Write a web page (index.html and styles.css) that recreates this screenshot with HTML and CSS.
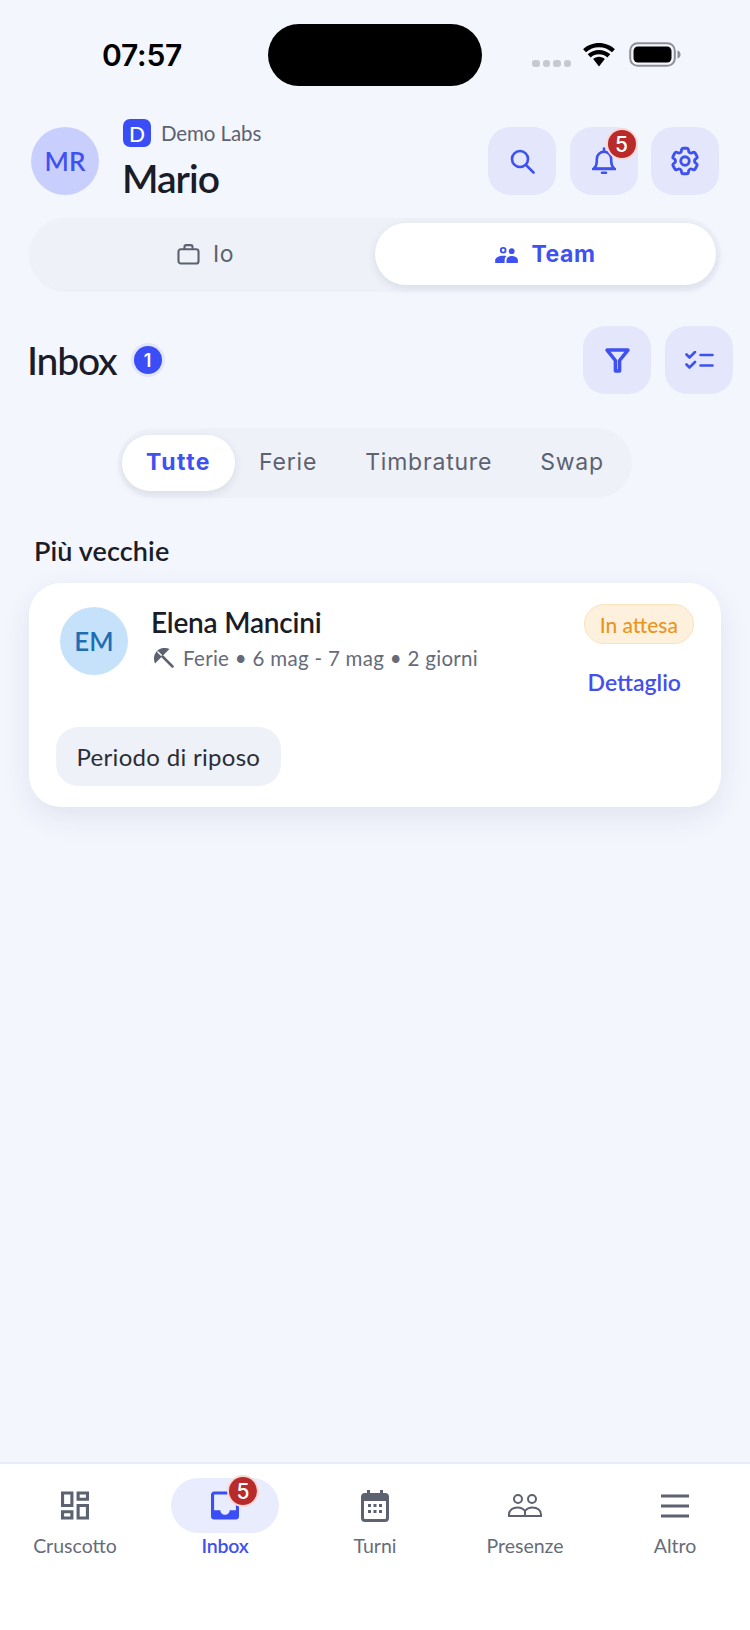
FILE: index.html
```html
<!DOCTYPE html>
<html lang="it">
<head>
<meta charset="utf-8">
<title>Inbox</title>
<link rel="stylesheet" href="styles.css">
</head>
<body>
<div class="app">
  <div class="status">
    <div class="time">07:57</div>
    <div class="island"></div>
    <div class="sys">
      <div class="dots"><i></i><i></i><i></i><i></i></div>
      <svg class="wifi" viewBox="0 0 34 24"><path d="M17 4.200c5 0 9.600 1.900 13 5.100l2.900-3.100C28.700 2.300 23.100 0 17 0S5.300 2.300 1.100 6.200L4 9.300c3.400-3.200 8-5.100 13-5.100z"/><path d="M17 11.200c3.200 0 6.100 1.200 8.300 3.200l3-3.100C25.300 8.500 21.300 6.900 17 6.900S8.700 8.500 5.700 11.300l3 3.100c2.200-2 5.100-3.200 8.300-3.200z"/><path d="M17 13.800c-2.300 0-4.300.9-5.800 2.300L17 23.500l5.800-7.400c-1.500-1.400-3.500-2.300-5.800-2.300z"/></svg>
      <svg class="battery" viewBox="0 0 52 25"><rect x="1.200" y="1.200" width="44.600" height="22.600" rx="7.500" fill="none" stroke="#8e9096" stroke-width="2"/><rect x="4.500" y="4.500" width="38" height="16" rx="4.500" fill="#000"/><path d="M48.500 8.500c2 .5 3 2 3 4s-1 3.500-3 4z" fill="#8e9096"/></svg>
    </div>
  </div>

  <header class="top">
    <div class="avatar avatar-me">MR</div>
    <div class="who">
      <div class="brand"><span class="logo">D</span><span class="brand-name">Demo Labs</span></div>
      <div class="name">Mario</div>
    </div>
    <div class="btns">
      <button class="icon-btn"><svg class="ic ic-search" viewBox="0 0 25 25"><circle cx="10" cy="10" r="8"/><path d="M16 16 23.500 23.500"/></svg></button>
      <button class="icon-btn"><svg class="ic ic-bell" viewBox="0 0 24 28"><path d="M2 21.500c2-2 2.800-3.500 2.800-7.500V12a7.200 7.200 0 0 1 14.400 0v2c0 4 .8 5.500 2.800 7.500z"/><path d="M1 22h22M12 1.500v3M10 25.800h4"/></svg><span class="badge badge-bell">5</span></button>
      <button class="icon-btn"><svg class="ic ic-gear" viewBox="0 0 24 24"><path d="M9.594 3.940c.09-.542.56-.94 1.110-.94h2.593c.55 0 1.020.398 1.110.94l.213 1.281c.063.374.313.686.645.870.074.04.147.083.22.127.325.196.72.257 1.075.124l1.217-.456a1.125 1.125 0 0 1 1.370.490l1.296 2.247a1.125 1.125 0 0 1-.26 1.431l-1.003.827c-.293.241-.438.613-.43.992a7.723 7.723 0 0 1 0 .255c-.008.378.137.75.43.991l1.004.827c.424.35.534.955.26 1.430l-1.298 2.247a1.125 1.125 0 0 1-1.369.491l-1.217-.456c-.355-.133-.75-.072-1.076.124a6.470 6.470 0 0 1-.22.128c-.331.183-.581.495-.644.869l-.213 1.281c-.09.543-.56.94-1.110.94h-2.594c-.55 0-1.019-.398-1.110-.94l-.213-1.281c-.062-.374-.312-.686-.644-.870a6.520 6.520 0 0 1-.22-.127c-.325-.196-.72-.257-1.076-.124l-1.217.456a1.125 1.125 0 0 1-1.369-.49l-1.297-2.247a1.125 1.125 0 0 1 .26-1.431l1.004-.827c.292-.24.437-.613.43-.991a6.932 6.932 0 0 1 0-.255c.007-.38-.138-.751-.43-.992l-1.004-.827a1.125 1.125 0 0 1-.26-1.430l1.297-2.247a1.125 1.125 0 0 1 1.370-.491l1.216.456c.356.133.751.072 1.076-.124.072-.044.146-.086.22-.128.332-.183.582-.495.644-.869l.214-1.280Z"/><circle cx="12" cy="12" r="3"/></svg></button>
    </div>
  </header>

  <div class="toggle">
    <div class="toggle-item">
      <svg class="ic-case" viewBox="0 0 24 22"><rect x="1.500" y="5.500" width="21" height="15" rx="2.500"/><path d="M7.800 5.500V3a1.800 1.800 0 0 1 1.800-1.800h4.800A1.800 1.800 0 0 1 16.200 3v2.500"/></svg>
      <span>Io</span>
    </div>
    <div class="toggle-item toggle-active">
      <svg class="ic-team" viewBox="0 0 24 18"><path fill-rule="evenodd" d="M8.500 1a3.500 3.500 0 1 1 0 7 3.500 3.500 0 0 1 0-7zm0 2a1.500 1.500 0 1 0 0 3 1.500 1.500 0 0 0 0-3z"/><circle cx="17.500" cy="5.500" r="3"/><path d="M0 18v-2.500C0 12 4 10.200 8.500 10.200c1.300 0 2.400.1 3.500.4-1.200 1-2 2.500-2 4.400v3z"/><path d="M12 18v-3c0-2.800 3-4.300 5.500-4.300S24 12.200 24 15v3z"/></svg>
      <span>Team</span>
    </div>
  </div>

  <div class="inbox-head">
    <h1 class="title">Inbox</h1>
    <span class="count">1</span>
    <div class="btns btns-push">
      <button class="icon-btn"><svg class="ic-filter" viewBox="0 0 24 24"><path d="M2 2h20l-8 10v10h-4V12z"/></svg></button>
      <button class="icon-btn"><svg class="ic-list" viewBox="0 0 29 19"><path d="M1.500 3.500 4.500 6.500 10 1M1.500 13.500 4.500 16.500 10 11M15.500 4h12M15.500 14.500h12"/></svg></button>
    </div>
  </div>

  <div class="seg-wrap">
    <div class="seg">
      <div class="seg-item seg-active">Tutte</div>
      <div class="seg-item">Ferie</div>
      <div class="seg-item">Timbrature</div>
      <div class="seg-item">Swap</div>
    </div>
  </div>

  <h2 class="section">Più vecchie</h2>

  <article class="card">
    <div class="card-top">
      <div class="avatar avatar-em">EM</div>
      <div class="card-main">
        <div class="person">Elena Mancini</div>
        <div class="meta">
          <svg class="ic-beach" viewBox="0 0 20 20"><path d="M1 15.500C-1 10.500 0 6 3 3s7.500-4 12.500-2L1 15.500z"/><path d="M3.500 3.500 8 8" class="beach-rib"/><path d="M8.500 8.500 18.500 18.500" class="beach-stick"/></svg>
          <span>Ferie • 6 mag - 7 mag • 2 giorni</span>
        </div>
      </div>
      <div class="card-side">
        <span class="pill-wait">In attesa</span>
        <span class="link">Dettaglio</span>
      </div>
    </div>
    <div class="chip">Periodo di riposo</div>
  </article>

  <div class="spacer"></div>

  <nav class="tabs">
    <div class="tab">
      <span class="tab-icon"><svg class="nav-svg" viewBox="3 3 18 18"><path class="fill-g" d="M19 5v2h-4V5h4M9 5v6H5V5h4m10 8v6h-4v-6h4M9 17v2H5v-2h4M21 3h-8v6h8V3zM11 3H3v10h8V3zm10 8h-8v10h8V11zm-10 4H3v6h8v-6z"/></svg></span>
      <span class="tab-label">Cruscotto</span>
    </div>
    <div class="tab tab-active">
      <span class="tab-icon"><span class="tab-pill"></span><svg class="nav-svg" viewBox="3 3 18 18"><path class="fill-b" d="M19 3H4.990c-1.110 0-1.980.89-1.980 2L3 19c0 1.100.88 2 1.990 2H19c1.100 0 2-.9 2-2V5c0-1.110-.9-2-2-2zm0 12h-4c0 1.660-1.350 3-3 3s-3-1.340-3-3H4.990V5H19v10z"/></svg><span class="badge badge-nav">5</span></span>
      <span class="tab-label">Inbox</span>
    </div>
    <div class="tab">
      <span class="tab-icon"><svg class="nav-svg nav-cal" viewBox="0 0 28 32"><path class="fill-g" fill-rule="evenodd" d="M6 0h3v3h10V0h3v3h2a4 4 0 0 1 4 4v21a4 4 0 0 1-4 4H4a4 4 0 0 1-4-4V7a4 4 0 0 1 4-4h2zM3 11v17a1 1 0 0 0 1 1h20a1 1 0 0 0 1-1V11z"/><path class="fill-g" d="M7 14h3v3H7zM12.500 14h3v3h-3zM18 14h3v3h-3zM7 20h3v3H7zM12.500 20h3v3h-3zM18 20h3v3h-3z"/></svg></span>
      <span class="tab-label">Turni</span>
    </div>
    <div class="tab">
      <span class="tab-icon"><svg class="nav-svg nav-people" viewBox="0 0 34 23"><circle cx="10" cy="5" r="4"/><circle cx="24" cy="5" r="4"/><path d="M1 22v-1.500C1 16 5 13.500 9.500 13.500c3.500 0 6 1.500 7.500 3.500 1.500-2 4-3.500 7.500-3.500C29 13.500 33 16 33 20.500V22zM17 17v5"/></svg></span>
      <span class="tab-label">Presenze</span>
    </div>
    <div class="tab">
      <span class="tab-icon"><svg class="nav-svg nav-menu" viewBox="0 0 28 24"><path d="M0 2h28M0 12h28M0 22h28"/></svg></span>
      <span class="tab-label">Altro</span>
    </div>
  </nav>
</div>
</body>
</html>
```

FILE: styles.css
```css
* { box-sizing: border-box; }
html, body { margin: 0; padding: 0; }
body { background: #f4f6fe; font-family: "Lato", "Liberation Sans", sans-serif; color: #1a1c28; }
.app { width: 750px; height: 1630px; display: flex; flex-direction: column; overflow: hidden; }

/* status bar */
.status { display: grid; grid-template-columns: 268px 214px 268px; height: 86px; padding-top: 24px; }
.time { font-family: "Inter", sans-serif; font-weight: 600; font-size: 30px; line-height: 62px; padding-left: 102px; color: #000; letter-spacing: -.2px; }
.island { background: #000; height: 62px; border-radius: 31px; }
.sys { display: flex; align-items: flex-start; padding-left: 50px; }
.dots { display: flex; gap: 3px; margin-top: 36px; }
.dots i { width: 7.500px; height: 7px; border-radius: 3px; background: #c6c9d0; display: block; }
.wifi { width: 34px; height: 24px; margin-left: 11px; margin-top: 19px; fill: #000; }
.battery { width: 52px; height: 25px; margin-left: 13px; margin-top: 18px; }

/* header */
.top { display: flex; align-items: center; height: 84px; margin-top: 33px; padding: 0 31px; }
.avatar { width: 68px; height: 68px; border-radius: 50%; display: flex; align-items: center; justify-content: center; font-size: 26px; font-weight: 600; flex: none; }
.avatar-me { background: #c9cffd; color: #3f51f0; }
.who { margin-left: 24px; align-self: flex-start; }
.brand { display: flex; align-items: center; height: 28px; }
.logo { width: 28px; height: 28px; border-radius: 7px; background: #3b4ef6; color: #fff; font-size: 21px; font-weight: 500; display: flex; align-items: center; justify-content: center; }
.brand-name { margin-left: 10px; font-size: 20.500px; color: #5d6270; letter-spacing: -.1px; }
.name { font-size: 39px; font-weight: 600; line-height: 46px; margin: 8px 0 0 -1px; letter-spacing: -1px; }
.btns { display: flex; gap: 13.500px; margin-left: auto; }
.icon-btn { position: relative; width: 68px; height: 68px; border: 0; border-radius: 22px; background: #e4e7fb; padding: 0; display: flex; align-items: center; justify-content: center; }
.ic { fill: none; stroke: #3f51f0; stroke-width: 2.600; stroke-linecap: round; stroke-linejoin: round; }
.ic-search { width: 25px; height: 25px; }
.ic-bell { width: 24px; height: 28px; }
.ic-gear { width: 34px; height: 34px; stroke-width: 2; }
.badge { position: absolute; width: 28px; height: 28px; border-radius: 50%; background: #b92b2b; color: #fff; font-size: 21px; font-weight: 500; display: flex; align-items: center; justify-content: center; box-shadow: 0 0 0 2px #f8d9d6; font-family: "Inter", sans-serif; }
.badge-bell { top: 3px; right: 2px; }

/* io / team */
.toggle { display: grid; grid-template-columns: 1fr 1fr; height: 72px; margin: 15px 30px 0; padding: 5px 4px; border-radius: 36px; background: #eef1f8; box-shadow: 0 1px 3px rgba(30,40,80,.05); }
.toggle-item { display: flex; align-items: center; justify-content: center; gap: 13px; border-radius: 31px; font-family: "Inter", sans-serif; font-size: 23px; color: #5d6270; font-weight: 400; letter-spacing: .6px; }
.toggle-active { background: #fff; color: #3f51f0; font-weight: 700; letter-spacing: .6px; box-shadow: 0 3px 10px rgba(30,40,80,.10); }
.ic-case { width: 23px; height: 21px; fill: none; stroke: #5d6270; stroke-width: 2.200; margin-left: 2px; }
.ic-team { width: 23px; height: 17px; fill: #3f51f0; }

/* inbox head */
.inbox-head { display: flex; align-items: center; margin-top: 36px; padding: 0 17px 0 27px; height: 68px; }
.title { margin: 0; font-size: 39px; font-weight: 500; letter-spacing: -1.200px; line-height: 46px; }
.count { width: 28px; height: 28px; margin-left: 17px; border-radius: 50%; background: #3b4ef6; color: #fff; font-family: "Inter", sans-serif; font-size: 18px; font-weight: 600; display: flex; align-items: center; justify-content: center; box-shadow: 0 0 0 3px #e2e6fc; }
.btns-push { margin-left: auto; gap: 14px; }
.ic-filter { width: 25px; height: 25px; fill: none; stroke: #3f51f0; stroke-width: 3.400; stroke-linejoin: round; stroke-linecap: round; }
.ic-list { width: 29px; height: 19px; fill: none; stroke: #3f51f0; stroke-width: 2.600; stroke-linecap: round; stroke-linejoin: round; }

/* segments */
.seg-wrap { display: flex; justify-content: center; margin-top: 34px; }
.seg { display: flex; padding: 7px 4px; height: 70px; border-radius: 35px; background: #eef1f8; }
.seg-item { display: flex; align-items: center; padding: 0 24px 2px; border-radius: 28px; font-family: "Inter", sans-serif; font-size: 23px; font-weight: 400; color: #5d6270; letter-spacing: .8px; }
.seg-active { background: #fff; color: #3f51f0; font-weight: 700; letter-spacing: 1.500px; padding: 0 24px 2px; box-shadow: 0 3px 10px rgba(30,40,80,.10); }

.section { margin: 37px 0 0; padding-left: 34px; font-size: 27px; font-weight: 600; line-height: 32px; letter-spacing: .1px; }

/* card */
.card { margin: 16px 29px 0; height: 224px; padding: 21px 27px; border-radius: 32px; background: #fff; box-shadow: 0 10px 30px rgba(30,40,80,.09); }
.card-top { display: flex; align-items: flex-start; height: 123px; }
.avatar-em { background: #c5e2fa; color: #1f6db3; margin: 3px 0 0 4px; }
.card-main { margin-left: 23px; }
.person { font-size: 28px; font-weight: 600; line-height: 34px; margin-top: 1px; letter-spacing: -.2px; }
.meta { display: flex; align-items: center; gap: 9px; height: 26px; margin-top: 6px; font-size: 20.500px; color: #666b79; letter-spacing: .3px; }
.ic-beach { width: 20px; height: 20px; fill: #5d6270; margin-left: 3px; }
.beach-rib { stroke: #fff; stroke-width: 1.500; fill: none; }
.beach-stick { stroke: #5d6270; stroke-width: 2.500; stroke-linecap: round; fill: none; }
.card-side { margin-left: auto; display: flex; flex-direction: column; align-items: flex-end; }
.pill-wait { display: flex; align-items: center; height: 40px; padding: 0 15px; border-radius: 20px; background: #fdf0dc; border: 1.500px solid #fae2bd; color: #e8961e; font-size: 21px; font-weight: 500; }
.link { margin: 23px 13px 0 0; font-size: 23px; font-weight: 600; line-height: 30px; color: #4350ee; }
.chip { display: inline-flex; align-items: center; height: 59px; padding: 0 20.500px; border-radius: 22px; background: #eef1f8; font-size: 24px; letter-spacing: .3px; color: #2a2d38; }

.spacer { flex: 1; }

/* bottom tabs */
.tabs { display: grid; grid-template-columns: repeat(5, 150px); height: 168px; background: #fff; border-top: 2px solid #e9ebf6; padding-top: 14px; }
.tab { display: flex; flex-direction: column; align-items: center; }
.tab-icon { position: relative; display: flex; align-items: center; justify-content: center; width: 108px; height: 55px; }
.tab-pill { position: absolute; inset: 0; border-radius: 28px; background: #e9ecfd; }
.tab-label { font-size: 19.500px; line-height: 24px; margin-top: 1px; color: #676c7a; }
.tab-active .tab-label { color: #3f51f0; font-weight: 600; letter-spacing: -.2px; }
.nav-svg { position: relative; width: 28px; height: 29px; }
.fill-g { fill: #5d6270; }
.fill-b { fill: #3b4ef6; }
.nav-cal { width: 28px; height: 32px; }
.nav-people { width: 34px; height: 23px; fill: none; stroke: #5d6270; stroke-width: 2; }
.nav-menu { width: 28px; height: 24px; fill: none; stroke: #5d6270; stroke-width: 3; }
.badge-nav { top: -1px; left: 58px; }
```
